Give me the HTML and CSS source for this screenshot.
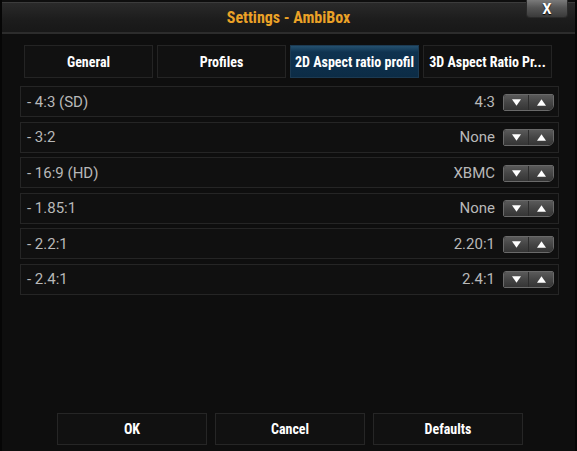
FILE: index.html
```html
<!DOCTYPE html>
<html>
  <head>
    <meta charset="utf-8" />
    <title>Settings - AmbiBox</title>
    <link rel="stylesheet" href="styles.css">
  </head>
  <body>
    <div class="dialog">
      <div class="header">
        <h1 class="title">Settings - AmbiBox</h1>
        <button class="close">X</button>
      </div>

      <div class="tabs">
        <div class="tab">General</div>
        <div class="tab">Profiles</div>
        <div class="tab active">2D Aspect ratio profil</div>
        <div class="tab">3D Aspect Ratio Pr...</div>
      </div>

      <div class="list">
        <div class="row">
          <span class="label">- 4:3 (SD)</span>
          <span class="value">4:3</span>
          <div class="spin">
            <span class="half"><svg viewBox="0 0 10 7"><polygon points="0,0 10,0 5,7" /></svg></span>
            <span class="half"><svg viewBox="0 0 10 7"><polygon points="5,0 10,7 0,7" /></svg></span>
          </div>
        </div>
        <div class="row">
          <span class="label">- 3:2</span>
          <span class="value">None</span>
          <div class="spin">
            <span class="half"><svg viewBox="0 0 10 7"><polygon points="0,0 10,0 5,7" /></svg></span>
            <span class="half"><svg viewBox="0 0 10 7"><polygon points="5,0 10,7 0,7" /></svg></span>
          </div>
        </div>
        <div class="row">
          <span class="label">- 16:9 (HD)</span>
          <span class="value">XBMC</span>
          <div class="spin">
            <span class="half"><svg viewBox="0 0 10 7"><polygon points="0,0 10,0 5,7" /></svg></span>
            <span class="half"><svg viewBox="0 0 10 7"><polygon points="5,0 10,7 0,7" /></svg></span>
          </div>
        </div>
        <div class="row">
          <span class="label">- 1.85:1</span>
          <span class="value">None</span>
          <div class="spin">
            <span class="half"><svg viewBox="0 0 10 7"><polygon points="0,0 10,0 5,7" /></svg></span>
            <span class="half"><svg viewBox="0 0 10 7"><polygon points="5,0 10,7 0,7" /></svg></span>
          </div>
        </div>
        <div class="row">
          <span class="label">- 2.2:1</span>
          <span class="value">2.20:1</span>
          <div class="spin">
            <span class="half"><svg viewBox="0 0 10 7"><polygon points="0,0 10,0 5,7" /></svg></span>
            <span class="half"><svg viewBox="0 0 10 7"><polygon points="5,0 10,7 0,7" /></svg></span>
          </div>
        </div>
        <div class="row">
          <span class="label">- 2.4:1</span>
          <span class="value">2.4:1</span>
          <div class="spin">
            <span class="half"><svg viewBox="0 0 10 7"><polygon points="0,0 10,0 5,7" /></svg></span>
            <span class="half"><svg viewBox="0 0 10 7"><polygon points="5,0 10,7 0,7" /></svg></span>
          </div>
        </div>
      </div>

      <div class="footer">
        <div class="btn">OK</div>
        <div class="btn">Cancel</div>
        <div class="btn">Defaults</div>
      </div>
    </div>
  </body>
</html>
```

FILE: styles.css
```css
html, body {
  margin: 0;
  padding: 0;
  background: #060606;
}

.dialog {
  position: relative;
  width: 573px;
  height: 451px;
  margin-left: 2px;
  background: #0e0e0e;
  display: flex;
  flex-direction: column;
  font-family: "Roboto", "Liberation Sans", sans-serif;
}

/* condensed bold labels */
.title, .tab, .btn {
  font-family: "Roboto", sans-serif;
  font-weight: bold;
  font-stretch: 80%;
  white-space: nowrap;
}

/* title bar */
.header {
  margin-top: 2px;
  height: 29px;
  border-top: 1px solid #3c3c3c;
  border-bottom: 2px solid #2c2c2c;
  background: linear-gradient(#2a2a2a, #1c1c1c 60%, #181818);
  display: flex;
  align-items: center;
  justify-content: center;
}
.title {
  margin: 0;
  font-size: 16px;
  color: #eba227;
}
.close {
  position: absolute;
  top: 0;
  left: 524px;
  width: 42px;
  height: 18px;
  padding: 0;
  border: 1px solid #2a2a2a;
  border-top: none;
  border-radius: 0 0 4px 4px;
  background: linear-gradient(#7a7a7a, #555 45%, #3a3a3a);
  color: #fff;
  font-family: "Roboto", sans-serif;
  font-weight: bold;
  font-size: 14px;
  line-height: 16px;
  text-shadow: 0 1px 1px #000;
}

/* tabs */
.tabs {
  display: flex;
  gap: 4px;
  margin: 11px 0 0 22px;
}
.tab {
  width: 127px;
  height: 31px;
  border: 1px solid #242424;
  background: #111;
  color: #fff;
  font-size: 14px;
  display: flex;
  align-items: center;
  justify-content: center;
  overflow: hidden;
}
.tab.active {
  border-color: #1c3a52;
  background: linear-gradient(#24506e, #0f3350 20%, #0c2c46);
}

/* option rows */
.list {
  display: flex;
  flex-direction: column;
  gap: 4.6px;
  margin: 8px 0 0 18px;
  width: 539px;
}
.row {
  height: 29px;
  border: 1px solid #252525;
  background: #101010;
  display: flex;
  align-items: center;
  padding: 0 4px 0 6px;
  font-size: 15px;
  color: #b8b8b8;
}
.label {
  flex: 1;
}
.value {
  margin-right: 8px;
}
.spin {
  display: flex;
  height: 15px;
  border: 1px solid #6a6a6a;
  border-radius: 3px 2px 6px 2px;
  overflow: hidden;
  margin-top: 1px;
}
.half {
  width: 24px;
  display: flex;
  align-items: center;
  justify-content: center;
  background: linear-gradient(#5a5a5a, #454545 50%, #353535);
}
.half + .half {
  border-left: 1px solid #2c2c2c;
}
.half svg {
  width: 9px;
  height: 7px;
  fill: #fff;
}

/* bottom buttons */
.footer {
  margin: auto 0 6px 55px;
  display: flex;
  gap: 8px;
}
.btn {
  width: 148px;
  height: 30px;
  border: 1px solid #262626;
  background: #111;
  color: #fff;
  font-size: 14px;
  display: flex;
  align-items: center;
  justify-content: center;
}
```
